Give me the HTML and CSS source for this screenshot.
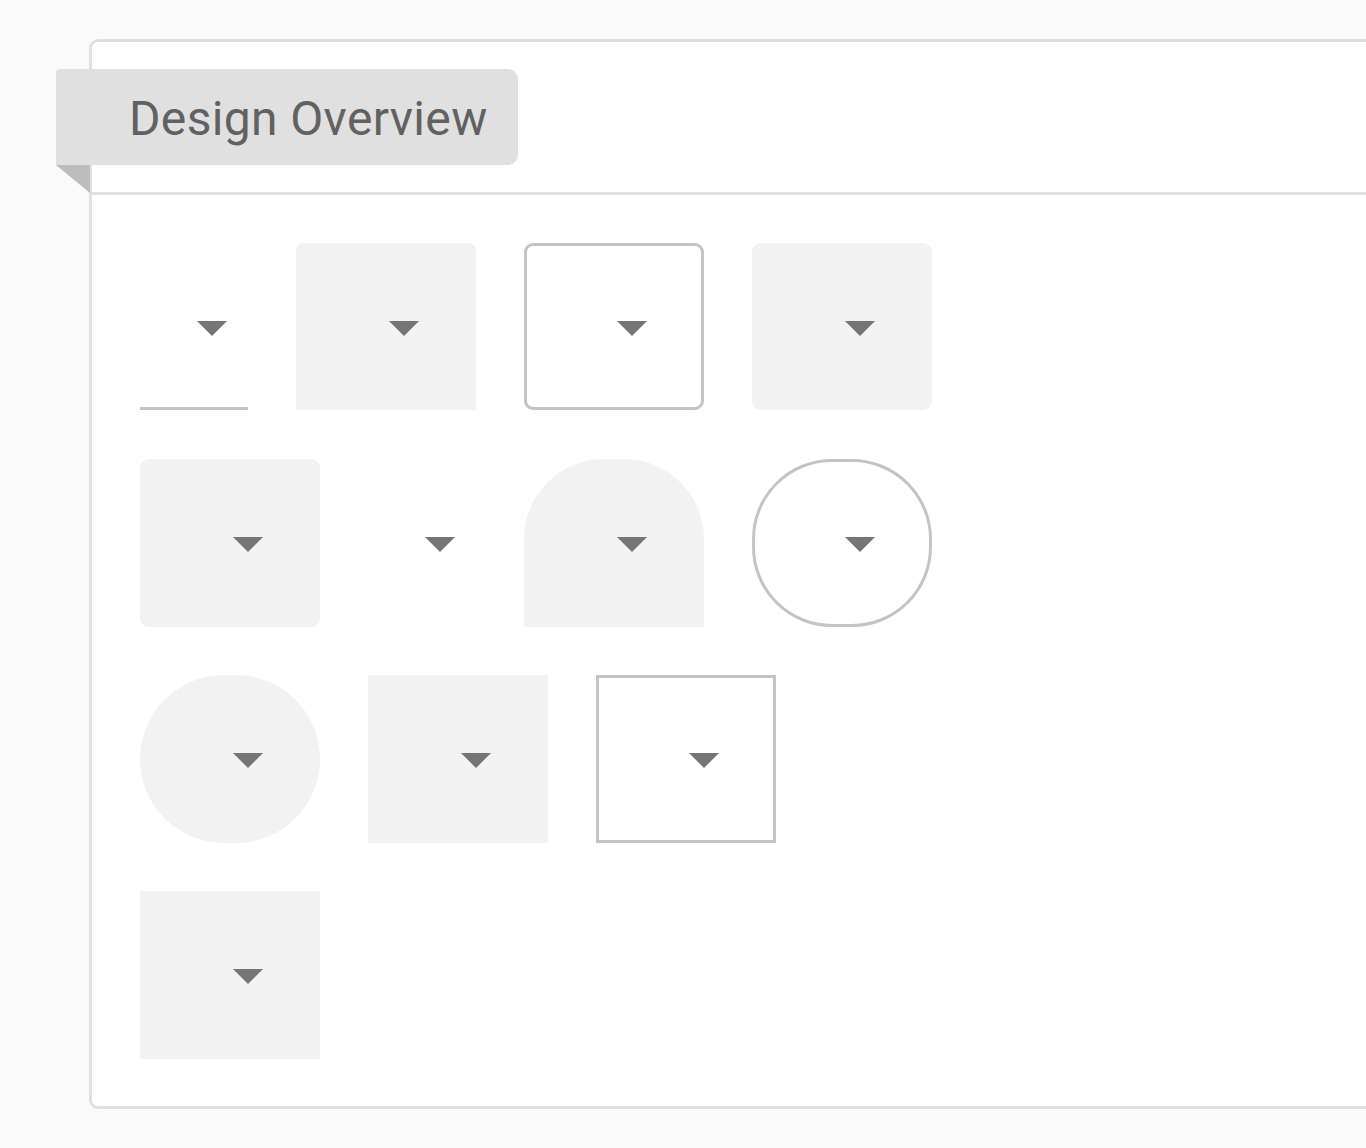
FILE: index.html
```html
<!DOCTYPE html>
<html lang="en">
<head>
<meta charset="utf-8">
<title>Design Overview</title>
<link rel="stylesheet" href="styles.css">
</head>
<body>
<div class="card">
  <div class="card-header">
    <div class="tab"><h1 class="tab-title">Design Overview</h1></div>
  </div>
  <div class="card-body">
    <div class="row">
      <div class="field legacy"><span class="arrow"></span></div>
      <div class="field fill r-top-sm"><span class="arrow"></span></div>
      <div class="field outline r-sm"><span class="arrow"></span></div>
      <div class="field fill r-sm"><span class="arrow"></span></div>
    </div>
    <div class="row">
      <div class="field fill r-sm"><span class="arrow"></span></div>
      <div class="field standard"><span class="arrow"></span></div>
      <div class="field fill r-top-lg"><span class="arrow"></span></div>
      <div class="field outline r-lg"><span class="arrow"></span></div>
    </div>
    <div class="row">
      <div class="field fill r-oval"><span class="arrow"></span></div>
      <div class="field fill"><span class="arrow"></span></div>
      <div class="field outline"><span class="arrow"></span></div>
    </div>
    <div class="row">
      <div class="field fill"><span class="arrow"></span></div>
    </div>
  </div>
</div>
</body>
</html>
```

FILE: styles.css
```css
html, body {
  margin: 0;
  padding: 0;
}
body {
  background: #fafafa;
  font-family: Roboto, "Liberation Sans", Arial, sans-serif;
  overflow: hidden;
  padding: 39px 0 0 89px;
  height: 1148px;
  box-sizing: border-box;
}
.card {
  margin-right: -60px;
  background: #ffffff;
  border: 3px solid #e0e0e0;
  border-radius: 9px;
}
.card-header {
  padding: 27px 0;
  border-bottom: 3px solid #e0e0e0;
}
.tab {
  position: relative;
  margin-left: -36px;
  width: 462px;
  height: 96px;
  box-sizing: border-box;
  background: #e0e0e0;
  border-radius: 4px 10px 10px 0;
  display: flex;
  align-items: center;
  padding: 4px 0 0 73px;
}
.tab::after {
  content: "";
  position: absolute;
  left: 0;
  top: 96px;
  width: 0;
  height: 0;
  border-top: 28px solid #bdbdbd;
  border-left: 34px solid transparent;
}
.tab-title {
  margin: 0;
  font-size: 48px;
  font-weight: 400;
  color: #616161;
  line-height: 1;
  letter-spacing: 0.35px;
}
.card-body {
  padding: 48px 48px 47px 48px;
  display: flex;
  flex-direction: column;
  gap: 48px;
}
.row {
  display: flex;
  gap: 48px;
  height: 168px;
}
.field {
  width: 180px;
  height: 168px;
  box-sizing: border-box;
  padding: 78px 0 0 93px;
}
.legacy, .standard {
  width: 108px;
  padding-left: 57px;
}
.legacy {
  border-bottom: 3px solid #c4c4c4;
}
.fill {
  background: #f2f2f2;
}
.outline {
  border: 3px solid #c4c4c4;
  padding: 75px 0 0 90px;
}
.r-top-sm {
  border-radius: 8px 8px 0 0;
}
.r-sm {
  border-radius: 9px;
}
.row:first-child .field {
  height: 167px;
}
.r-top-lg {
  border-radius: 80px 80px 0 0;
}
.r-lg {
  border-radius: 80px;
}
.r-oval {
  border-radius: 84px;
}
.arrow {
  display: block;
  width: 0;
  height: 0;
  border-left: 15px solid transparent;
  border-right: 15px solid transparent;
  border-top: 15px solid #757575;
}
```
